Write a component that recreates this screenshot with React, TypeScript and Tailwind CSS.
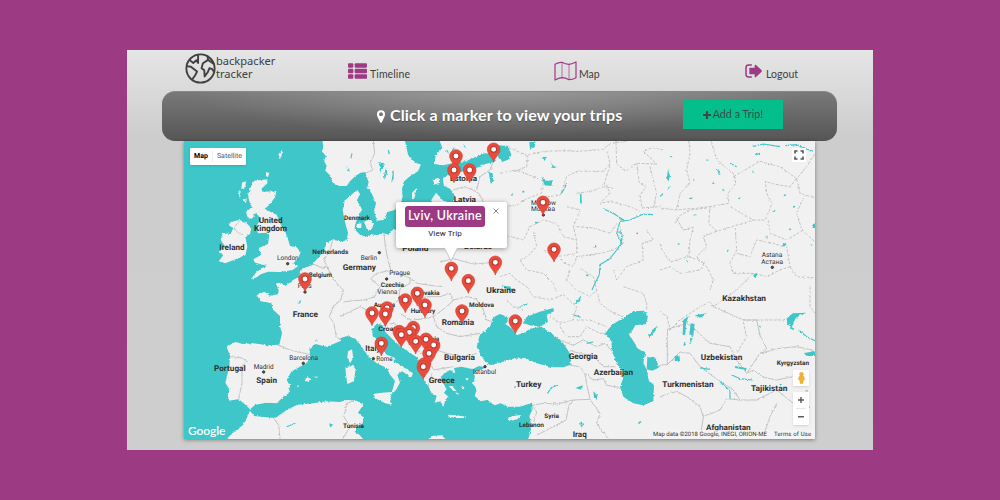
import React from "react";

type Label = [text: string, x: number, baseline: number, width: number, size: number, weight?: number];

// Map drawing units are thirds of a pixel.
const labels: Label[] = [
  ["United", 236, 249, 72, 24], ["Kingdom", 222, 272, 99, 24], ["Ireland", 118, 331, 76, 24],
  ["London", 291, 360, 65, 20, 400], ["Netherlands", 397, 342, 108, 19], ["Belgium", 386, 410, 70, 19],
  ["Paris", 353, 443, 42, 20, 400], ["Denmark", 492, 240, 78, 19], ["Germany", 488, 389, 100, 24],
  ["Berlin", 542, 361, 49, 20, 400], ["Prague", 628, 406, 62, 20, 400], ["Czechia", 602, 442, 70, 19],
  ["Estonia", 810, 124, 81, 23], ["Latvia", 821, 187, 67, 23], ["Poland", 667, 333, 78, 23],
  ["Belarus", 852, 326, 84, 23], ["Moscow", 1053, 194, 75, 20, 400], ["Москва", 1053, 214, 72, 20, 400],
  ["Astana", 1745, 352, 62, 20, 400], ["Астана", 1744, 371, 65, 20, 400], ["Ukraine", 919, 460, 88, 24],
  ["France", 338, 530, 76, 24], ["Barcelona", 328, 660, 86, 20, 400], ["Madrid", 221, 686, 60, 20, 400],
  ["Portugal", 102, 693, 95, 24], ["Spain", 229, 728, 62, 24], ["Vienna", 592, 463, 60, 20, 400],
  ["Austria", 581, 500, 64, 19], ["Slovakia", 703, 466, 76, 19], ["Hungary", 692, 518, 74, 19],
  ["Moldova", 867, 500, 75, 19], ["Romania", 785, 555, 97, 24], ["Croatia", 595, 573, 70, 19],
  ["Serbia", 722, 602, 56, 19], ["Italy", 556, 634, 45, 24], ["Rome", 589, 663, 49, 20, 400],
  ["Bulgaria", 792, 661, 93, 24], ["Istanbul", 879, 703, 69, 20, 400], ["Greece", 746, 729, 78, 24],
  ["Tunisia", 489, 864, 63, 19], ["Georgia", 1166, 657, 87, 24], ["Azerbaijan", 1241, 706, 118, 24],
  ["Turkey", 1008, 742, 76, 24], ["Syria", 1093, 835, 44, 19], ["Lebanon", 1017, 862, 75, 19],
  ["Iraq", 1178, 892, 42, 24], ["Kazakhstan", 1627, 483, 131, 24], ["Uzbekistan", 1562, 661, 125, 24],
  ["Kyrgyzstan", 1790, 674, 97, 19], ["Turkmenistan", 1447, 741, 154, 24],
  ["Tajikistan", 1713, 754, 109, 24], ["Afghanistan", 1578, 871, 134, 23],
];

const cities = [
  [323, 371], [598, 338], [620, 417], [1090, 225], [1777, 382], [375, 456],
  [370, 670], [251, 696], [580, 656], [915, 680], [660, 474],
];

const markers = [
  [941, 28], [828, 48], [822, 90], [869, 90], [1089, 187], [1122, 328], [946, 367], [814, 385],
  [375, 417], [865, 422], [712, 460], [676, 480], [735, 495], [621, 504], [846, 513], [576, 519],
  [616, 522], [1006, 543], [700, 563], [658, 575], [688, 577], [664, 584], [738, 598], [707, 604],
  [604, 610], [761, 615], [747, 640], [733, 672], [730, 680],
];

const seas = [
  // Atlantic, North Sea, Baltic and Mediterranean
  "M0 0 L427 0 L430 20 L426 35 L438 48 L432 62 L440 78 L436 92 L452 108 L456 126 L476 138 L500 138 L510 124 L526 108 L542 98 L556 96 L560 110 L566 126 L562 142 L576 162 L588 190 L582 212 L590 242 L612 240 L622 216 L644 210 L660 196 L668 170 L666 148 L672 124 L694 106 L714 94 L722 76 L700 62 L684 44 L680 24 L674 0 L778 0 L787 24 L768 44 L762 72 L790 76 L822 68 L856 64 L888 50 L914 40 L944 42 L944 66 L916 72 L896 82 L872 88 L842 96 L808 104 L788 114 L792 138 L810 146 L824 164 L822 190 L790 182 L768 158 L754 180 L740 230 L724 262 L700 280 L640 268 L626 284 L606 278 L590 286 L572 282 L560 290 L540 284 L524 268 L526 250 L538 226 L546 210 L540 196 L530 182 L540 162 L532 150 L512 166 L494 182 L488 212 L496 250 L504 278 L500 300 L482 306 L460 298 L440 308 L432 332 L414 354 L394 376 L366 386 L358 410 L336 422 L316 438 L302 428 L288 430 L296 450 L295 462 L270 468 L254 455 L230 465 L242 484 L274 490 L280 510 L300 528 L300 560 L306 580 L298 614 L262 616 L220 610 L188 612 L166 606 L140 620 L150 648 L148 680 L136 728 L148 748 L144 782 L176 778 L194 792 L210 808 L226 794 L260 788 L290 790 L310 770 L326 760 L330 738 L320 720 L335 694 L376 672 L391 654 L388 626 L406 612 L440 620 L480 604 L482 594 L502 588 L526 596 L542 616 L564 648 L590 670 L620 684 L630 704 L645 722 L638 748 L632 764 L646 752 L660 728 L652 704 L666 694 L694 712 L699 700 L670 680 L640 664 L646 654 L620 644 L604 624 L594 604 L578 588 L576 566 L592 550 L608 556 L616 576 L636 596 L660 618 L692 640 L714 654 L722 684 L726 712 L746 740 L756 762 L770 768 L764 788 L782 784 L790 800 L797 778 L806 772 L792 758 L800 748 L790 732 L782 712 L794 698 L810 690 L826 700 L822 684 L844 680 L872 686 L900 688 L884 700 L884 716 L876 728 L890 748 L884 768 L902 784 L922 780 L944 796 L962 790 L984 800 L1020 800 L1056 788 L1058 808 L1048 828 L1055 860 L1044 900 L800 900 L784 886 L756 888 L742 900 L552 900 L538 884 L524 876 L530 862 L548 850 L550 832 L534 818 L550 794 L530 782 L500 780 L480 786 L440 784 L400 790 L352 794 L320 810 L286 834 L222 828 L210 812 L202 830 L190 854 L162 876 L136 900 L0 900Z",
  // Black Sea
  "M960 522 L940 532 L930 560 L900 584 L890 620 L902 644 L914 662 L930 676 L960 668 L1000 656 L1035 654 L1070 670 L1110 680 L1150 682 L1172 674 L1172 644 L1150 610 L1120 584 L1084 560 L1050 566 L1030 580 L1010 585 L996 566 L976 552 L986 532Z",
  "M1030 550 L1040 530 L1080 515 L1120 504 L1122 514 L1100 524 L1104 546 L1080 560 L1050 556Z",
  // Caspian Sea
  "M1276 580 L1296 554 L1326 536 L1360 514 L1392 512 L1404 530 L1398 552 L1366 556 L1356 574 L1346 582 L1366 612 L1372 626 L1396 636 L1390 668 L1400 690 L1406 720 L1422 736 L1420 784 L1390 796 L1360 790 L1330 770 L1320 740 L1330 714 L1324 690 L1304 656 L1296 630 L1294 604Z",
  "M1402 650 L1430 656 L1436 684 L1416 692 L1400 686Z",
  // Sea of Marmara
  "M880 686 L898 678 L914 682 L906 690Z",
  // Lakes
  "M956 16 L984 18 L994 44 L988 58 L966 66 L954 50Z", "M1048 6 L1066 4 L1064 20 L1050 28Z",
  "M1084 110 L1102 124 L1118 120 L1114 138 L1094 136Z", "M1081 52 L1098 50 L1096 60Z",
  "M1112 62 L1118 76 L1130 82 L1118 84Z", "M1200 162 L1204 160 L1206 194 L1200 188Z",
  "M598 66 L612 70 L608 86 L600 96Z", "M612 106 L618 84 L622 96 L614 120Z",
  "M638 100 L642 88 L640 120 L634 128Z", "M926 96 L938 100 L940 124 L932 132Z",
  "M1510 540 L1526 528 L1518 550 L1516 586 L1508 584Z", "M1532 550 L1544 552 L1540 588 L1528 584Z",
  "M1544 526 L1580 520 L1562 534Z", "M1484 648 L1498 646 L1500 662 L1484 664Z",
  "M1820 536 L1838 520 L1880 518 L1856 528 L1842 544 L1836 560 L1822 554Z",
  "M1872 640 L1905 632 L1905 648 L1880 648Z", "M1896 254 L1905 250 L1905 264 L1898 264Z",
  "M1806 308 L1820 312 L1812 320Z", "M1722 402 L1732 400 L1728 414 L1720 410Z",
  "M1464 88 L1470 108 L1466 124 L1460 116Z", "M1664 678 L1700 684 L1698 690 L1666 684Z",
  "M1186 744 L1208 736 L1206 750Z", "M1240 754 L1252 766 L1250 780 L1242 772Z",
  "M1404 588 L1432 556 L1426 572 L1408 594Z", "M1184 490 L1204 466 L1200 484 L1188 492Z",
  "M1006 504 L1044 490 L1040 496 L1020 500Z", "M1200 846 L1210 852 L1204 866Z",
  "M448 850 L460 854 L450 862Z", "M964 436 L990 440 L998 450 L978 446Z",
  "M1373 844 L1384 846 L1378 852Z", "M1002 740 L1010 738 L1006 744Z",
];

const islands = [
  // Great Britain
  "M222 122 L262 118 L262 130 L243 148 L248 155 L290 154 L285 172 L268 195 L254 206 L272 216 L290 224 L300 250 L322 290 L330 318 L350 322 L362 336 L354 356 L340 370 L355 378 L338 390 L300 396 L265 395 L244 402 L230 412 L213 418 L226 400 L244 385 L262 378 L226 368 L220 358 L244 345 L234 325 L264 312 L268 285 L262 278 L234 280 L230 258 L242 236 L226 215 L218 236 L204 235 L198 216 L215 202 L208 186 L204 165 L212 142Z",
  // Ireland
  "M152 246 L178 240 L196 246 L214 264 L210 282 L196 290 L202 320 L196 346 L170 356 L136 370 L116 364 L130 346 L116 336 L134 318 L122 300 L128 278 L152 282 L160 264 L146 256Z",
  "M186 130 L200 122 L194 142 L184 148Z", "M176 156 L182 152 L180 176Z", "M188 178 L200 176 L198 190Z",
  "M258 98 L268 98 L264 112 L258 108Z", "M298 40 L308 28 L304 50 L298 62Z",
  // Danish and Baltic islands
  "M552 246 L570 236 L582 250 L576 266 L562 270Z", "M530 252 L544 250 L544 264 L532 264Z",
  "M696 158 L710 144 L704 170 L696 178Z", "M758 118 L776 114 L780 128 L762 134Z",
  // Mediterranean
  "M504 634 L516 628 L520 654 L510 670 L502 652Z", "M496 682 L522 676 L526 692 L522 724 L502 732 L498 704Z",
  "M580 762 L604 758 L636 756 L630 776 L634 794 L616 790 L584 774Z",
  "M374 716 L384 712 L394 718 L386 726 L376 724Z", "M402 710 L414 710 L410 714Z", "M350 738 L358 736 L354 742Z",
  "M804 824 L830 826 L858 830 L856 834 L830 834 L806 830Z",
  "M982 834 L1000 828 L1024 824 L1012 838 L994 842Z",
  "M826 756 L838 762 L832 766Z", "M842 738 L854 742 L848 748Z", "M816 738 L830 754 L820 752 L806 738Z",
  "M858 716 L866 714 L862 722Z", "M760 210 L772 196 L766 214Z",
];

const countryBorders = [
  "M580 3 L584 40 L570 70 L578 90 L556 100", "M458 300 L450 330 L432 360 L446 390 L456 410",
  "M384 380 L400 372 L426 384 L440 380 L450 400 L470 430 L490 450 L482 480 L460 500 L448 530 L462 550 L468 586 L480 600",
  "M294 616 L330 630 L374 640 L392 644", "M150 650 L186 654 L200 664 L186 680 L186 730 L176 776",
  "M612 280 L616 320 L624 360 L634 396 L660 402 L690 414 L712 430 L750 436 L790 440",
  "M628 392 L590 400 L572 416 L600 440 L584 470 L556 480 L520 482 L490 486",
  "M690 414 L690 430 L660 446 L656 480 L630 500 L600 498 L560 510 L540 500 L500 520 L480 530",
  "M656 480 L700 484 L740 470 L780 470 L810 460 L820 480 L800 500 L760 530 L720 538 L690 540 L660 520",
  "M820 480 L860 470 L888 476 L910 510 L920 540 L940 546", "M760 530 L770 560 L800 580 L840 590 L900 580",
  "M780 366 L820 356 L880 372 L930 368 L950 364", "M820 150 L852 140 L880 150 L896 160 L912 190 L930 200 L950 230",
  "M940 66 L930 90 L900 110 L890 150", "M610 556 L640 550 L664 564 L700 560 L700 600 L720 640 L740 640 L760 690 L820 680",
  "M730 590 L760 600 L770 630 L800 640 L850 650 L890 640", "M744 740 L756 700", "M280 832 L296 856 L300 896",
  "M530 780 L500 790 L492 830 L510 860 L486 900", "M1056 796 L1090 790 L1130 792 L1180 780 L1230 778",
  "M1170 676 L1200 680 L1214 700 L1220 730 L1230 778 L1260 820 L1250 850 L1284 896",
  "M1180 780 L1166 800 L1158 840 L1070 886", "M1060 800 L1070 816 L1060 850", "M1214 700 L1240 720 L1270 716 L1280 736 L1318 742",
  "M1160 630 L1200 640 L1240 648 L1270 680 L1306 680", "M1140 600 L1180 616 L1210 600 L1250 620 L1276 610 L1310 650",
  "M1400 690 L1450 674 L1462 674 L1462 568 L1520 550 L1540 564 L1590 610 L1650 620 L1670 660 L1700 700 L1740 640 L1760 626 L1740 586 L1730 540",
  "M1462 674 L1500 636 L1530 640 L1560 680 L1600 710 L1660 750 L1680 780",
  "M1730 540 L1690 540 L1600 500 L1590 486", "M1740 640 L1790 626 L1850 620 L1905 632",
  "M1440 770 L1490 754 L1520 770 L1560 800 L1570 830 L1620 810 L1640 776 L1680 780 L1730 780 L1790 750 L1840 790 L1890 800",
  "M1700 700 L1720 690 L1750 712 L1790 720 L1840 710 L1880 710", "M1570 830 L1560 896", "M1790 790 L1770 830 L1750 890",
];

const regionBorders = [
  "M960 30 L990 24 L1040 46 L1090 34 L1150 32 L1200 34 L1270 28 L1290 10 L1340 4",
  "M960 100 L1010 90 L1050 106 L1090 124 L1084 160 L1040 176 L1010 196 L960 200",
  "M1044 46 L1040 80 L1000 96", "M1100 170 L1140 166 L1160 110 L1190 94 L1270 94 L1290 70 L1280 30",
  "M1190 160 L1240 152 L1280 136 L1290 160 L1260 190 L1290 184 L1350 200 L1380 214",
  "M1290 76 L1270 140 L1300 144", "M1308 6 L1310 70 L1336 94 L1370 70 L1430 72 L1390 34 L1420 22 L1450 30",
  "M1370 70 L1378 130 L1400 140 L1380 164 L1386 204 L1440 200", "M1410 80 L1430 160 L1420 206",
  "M960 320 L986 288 L1030 300 L1050 260 L1090 240 L1130 250 L1150 290 L1190 300",
  "M1020 360 L1046 346 L1070 320 L1060 270", "M1090 330 L1130 350 L1190 340 L1190 300 L1180 260 L1200 210 L1160 200",
  "M1020 360 L1040 390 L1090 400 L1120 430 L1130 456", "M1150 368 L1180 380 L1190 350 L1260 340 L1300 330 L1330 310 L1320 260",
  "M1190 260 L1240 264 L1290 280 L1310 250", "M1300 390 L1310 420 L1340 380 L1390 360 L1386 310 L1420 300 L1400 270",
  "M1170 390 L1160 420 L1190 450 L1230 470 L1250 450 L1240 410 L1200 384",
  "M1526 0 L1530 40 L1520 90 L1530 130 L1500 160 L1490 210", "M1594 4 L1610 60 L1660 100 L1668 130 L1644 160 L1646 190 L1590 200 L1490 210 L1440 204",
  "M1660 110 L1740 64 L1800 80 L1850 116 L1880 80 L1905 40", "M1850 116 L1830 140 L1780 132 L1756 124 L1760 160 L1776 190 L1756 240 L1720 240 L1650 200",
  "M1590 200 L1586 250 L1610 274 L1700 246 L1720 240", "M1850 116 L1860 160 L1905 174", "M1870 174 L1850 220 L1866 270 L1905 306",
  "M1764 240 L1770 280 L1820 300 L1870 270", "M1610 274 L1570 288 L1580 320 L1550 350 L1580 380 L1600 420 L1590 450",
  "M1666 264 L1670 330 L1650 370 L1660 400 L1720 400 L1760 410 L1800 390 L1830 380 L1820 320",
  "M1670 340 L1710 350 L1730 300 L1780 310 L1810 320", "M1830 380 L1850 410 L1905 414", "M1720 400 L1690 430 L1670 450 L1600 500",
  "M1490 236 L1510 270 L1540 262 L1530 300 L1526 350 L1470 366 L1446 330 L1440 310", "M1486 250 L1500 226 L1530 210 L1580 204",
  "M1440 390 L1470 380 L1500 400 L1560 390 L1574 370 L1520 346", "M1590 486 L1560 500 L1500 540 L1470 570 L1462 530 L1440 514",
  "M1690 540 L1810 540 L1820 536", "M1690 546 L1700 590 L1670 640", "M1890 440 L1890 500 L1905 520",
  "M1040 440 L1060 470 L1110 480 L1150 464 L1190 500 L1180 540 L1140 550 L1110 530", "M1190 540 L1230 540 L1280 560",
  "M1250 450 L1260 490 L1300 520 L1330 530", "M1140 560 L1160 590 L1200 590 L1220 560 L1260 580 L1280 580",
  "M960 410 L990 400 L1010 420 L1040 440", "M980 480 L1000 500 L1030 510", "M1330 440 L1390 460 L1400 490 L1400 512",
];

const rivers = [
  "M1236 450 L1248 424 L1258 404 L1260 374 L1290 356 L1310 330 L1326 310 L1310 280 L1320 244 L1350 240 L1390 222 L1420 224",
  "M1330 240 L1300 220 L1270 206", "M1316 274 L1326 284 L1322 310", "M1144 160 L1154 144 L1160 130",
  "M1620 726 L1650 752 L1650 776", "M1830 554 L1840 570 M1856 570 L1880 590 L1905 602", "M1654 704 L1680 716 L1716 720",
  "M1716 20 L1750 12 L1800 20 M1816 17 L1850 14 L1896 34", "M1726 44 L1740 40", "M1440 170 L1450 160 M1462 148 L1470 140",
  "M1650 70 L1670 80", "M1612 88 L1620 104", "M1515 606 L1512 616 M1536 594 L1530 612", "M1470 46 L1476 54",
  "M1102 760 L1116 742 L1134 736", "M680 18 L690 34", "M516 40 L512 56", "M530 110 L534 140", "M700 446 L706 442",
  "M818 30 L824 22 M800 30 L806 40 M850 14 L856 24", "M500 80 L508 94", "M625 30 L628 42",
  "M1640 336 L1646 328", "M1520 360 L1524 366", "M1786 212 L1778 214", "M1560 684 L1590 688", "M354 490 L362 482",
  "M406 604 L412 600", "M320 860 L346 850", "M1180 524 L1202 532", "M1220 610 L1240 606",
];

const dots = [
  [1540, 120], [1582, 60], [1600, 130], [1533, 175], [1630, 150], [1680, 175], [1720, 95], [1814, 166], [1842, 200],
  [1760, 290], [1830, 268], [1895, 312], [1496, 312], [1546, 225], [1246, 320], [1070, 248],
  [1222, 406], [1144, 360], [996, 165], [1030, 155], [1372, 280], [1740, 560], [1880, 752], [1802, 734],
];

function Marker({ x, y }: { x: number; y: number }) {
  return (
    <g transform={`translate(${x} ${y})`}>
      <path d="M0 38 C-3 25 -19 15 -19 0 A19 19 0 0 1 19 0 C19 15 3 25 0 38Z" fill="#ea4b3c" stroke="#d5402f" strokeWidth="2" />
      <circle r="9" fill="#fff" stroke="#b63c34" strokeWidth="3.5" />
    </g>
  );
}

function MapDrawing() {
  return (
    <svg viewBox="12 3 1893 894" preserveAspectRatio="none" className="block h-full w-full" fontFamily="Roboto, 'Liberation Sans', sans-serif">
      <defs>
        <filter id="coast" x="0" y="0" width="1" height="1" colorInterpolationFilters="sRGB">
          <feTurbulence type="fractalNoise" baseFrequency="0.14" numOctaves="2" seed="4" />
          <feDisplacementMap in="SourceGraphic" scale="8" xChannelSelector="R" yChannelSelector="G" />
        </filter>
      </defs>
      <rect x="0" y="0" width="1920" height="910" fill="#f1f1f1" />
      <g filter="url(#coast)">
        <rect x="-20" y="-20" width="1960" height="950" fill="#f1f1f1" />
        <g fill="none" stroke="#bcbcbc" strokeWidth="2.6">
          {countryBorders.map((d) => <path key={d} d={d} />)}
          <g strokeDasharray="9 4">
            {regionBorders.map((d) => <path key={d} d={d} />)}
          </g>
        </g>
        <g fill="#3ec6c9">
          {seas.map((d) => <path key={d} d={d} />)}
          {dots.map(([x, y]) => <ellipse key={`${x}-${y}`} cx={x} cy={y} rx="3.5" ry="2.5" />)}
        </g>
        <g fill="none" stroke="#3ec6c9" strokeWidth="3.4">
          {rivers.map((d) => <path key={d} d={d} />)}
        </g>
        <g fill="#f1f1f1">
          {islands.map((d) => <path key={d} d={d} />)}
        </g>
        <path d="M178 242 L162 264 L176 280 L192 284" fill="none" stroke="#bcbcbc" strokeWidth="2.5" />
      </g>
      <g fill="#555" stroke="#333" strokeWidth="3">
        {cities.map(([x, y]) => <circle key={`${x}-${y}`} cx={x} cy={y} r="3.5" />)}
      </g>
      <g fill="#303030" textRendering="geometricPrecision">
        {labels.map(([text, x, y, width, size, weight = 700]) => (
          <text key={text} x={x} y={y} textLength={width} lengthAdjust="spacingAndGlyphs" fontSize={size} fontWeight={weight}>{text}</text>
        ))}
      </g>
      {markers.map(([x, y]) => <Marker key={`${x}-${y}`} x={x} y={y} />)}
    </svg>
  );
}

function GlobeLogo() {
  return (
    <svg viewBox="0 0 90 90" className="h-[31px] w-[31px] shrink-0" fill="none" stroke="#404040" strokeWidth="5.5" strokeLinejoin="round">
      <circle cx="45" cy="45" r="41" />
      <path d="M13 20 L24 29 L33 21 L38 29 L38 6 M5 38 L17 40 L35 54 L30 64 L21 77 M84 32 L67 20 L65 7 M84 54 L79 47 L71 44 L66 56 L57 68 L56 50 L48 44 L52 30 L67 20" />
    </svg>
  );
}

function ListIcon() {
  return (
    <svg viewBox="0 0 57 46" className="h-[16px] w-[19px]" fill="#9c3a83">
      {[0, 16.5, 33].map((y) => (
        <g key={y}>
          <rect y={y} width="16" height="13" rx="3" />
          <rect x="20" y={y} width="37" height="13" rx="3" />
        </g>
      ))}
    </svg>
  );
}

function FoldedMapIcon() {
  return (
    <svg viewBox="0 0 69 60" className="h-[20px] w-[23px]" fill="none" stroke="#9c3a83" strokeWidth="3.6" strokeLinejoin="round">
      <path d="M3 10 Q14 3 24 4 Q34 10 45 10 Q56 8 66 3 V50 Q56 56 45 56 Q34 50 24 50 Q14 51 3 57Z" />
      <path d="M24 4 V50 M45 10 V56" strokeWidth="2" />
    </svg>
  );
}

function LogoutIcon() {
  return (
    <svg viewBox="0 0 51 42" className="h-[14px] w-[17px]">
      <path d="M19 3 H11 Q3 3 3 11 V31 Q3 39 11 39 H19" fill="none" stroke="#9c3a83" strokeWidth="4.5" strokeLinecap="round" />
      <path d="M13 13 Q13 11 15 11 H29 V4 Q30 1 33 3 L50 19 Q51 21 50 23 L33 39 Q30 41 29 38 V31 H15 Q13 31 13 29Z" fill="#9c3a83" />
    </svg>
  );
}

function InfoWindow() {
  return (
    <div className="absolute left-[212px] top-[61px] h-[46px] w-[111px] rounded-[2px] bg-white shadow-[0_1px_5px_rgba(0,0,0,0.38)]">
      <svg viewBox="0 0 14 15" className="absolute left-[48px] top-[45px] h-[15px] w-[14px] overflow-visible">
        <path d="M0 0 L7 14 L14 0" fill="#fff" stroke="#bbb" strokeWidth=".8" />
        <path d="M0 -1 H14 V1 H0Z" fill="#fff" />
      </svg>
      <div className="flex flex-col pl-[9px] pt-[4px]">
        <span className="flex h-[21px] w-[80px] items-center justify-center whitespace-nowrap rounded-[3px] bg-[#9c3a83] text-[12.5px] font-semibold tracking-[0.3px] text-white">Lviv, Ukraine</span>
        <span className="mt-[1px] w-[80px] whitespace-nowrap text-center font-[Roboto,sans-serif] text-[8px] leading-[12px] tracking-[0.1px] text-[#222]">View Trip</span>
      </div>
      <svg viewBox="0 0 6 6" className="absolute right-[8px] top-[6px] size-[6px]" stroke="#888" strokeWidth="1"><path d="M.5 .5 L5.5 5.5 M5.5 .5 L.5 5.5" /></svg>
    </div>
  );
}

function MapControls() {
  return (
    <div className="font-[Roboto,sans-serif]">
      <div className="absolute left-[6px] top-[7px] flex h-[17px] w-[56px] items-center whitespace-nowrap rounded-[1px] bg-white text-[7px] shadow-sm [text-rendering:geometricPrecision]">
        <span className="w-[23px] border-r border-[#eee] text-center font-bold text-black">Map</span>
        <span className="flex-1 text-center text-[#565656]">Satellite</span>
      </div>
      <div className="absolute right-[9px] top-[7px] flex size-[14px] items-center justify-center bg-white">
        <svg viewBox="0 0 10 10" className="size-[10px]" fill="none" stroke="#555" strokeWidth="1.6"><path d="M1 3.5 V1 H3.5 M6.5 1 H9 V3.5 M9 6.5 V9 H6.5 M3.5 9 H1 V6.5" /></svg>
      </div>
      <div className="absolute right-[6px] top-[229px] flex h-[16px] w-[16px] items-center justify-center rounded-[1px] bg-white shadow-sm">
        <svg viewBox="0 0 20 34" className="h-[12px] w-[7px]" fill="#f5b32b" stroke="#d99221" strokeWidth="1">
          <path d="M3 13 Q10 9 17 13 L19 22 L15 22 L14 33 H6 L5 22 L1 22Z" /><circle cx="10" cy="6" r="5.5" />
        </svg>
      </div>
      <div className="absolute right-[6px] top-[251px] flex h-[33px] w-[16px] flex-col items-center rounded-[1px] bg-white shadow-sm">
        <svg viewBox="0 0 16 33" className="h-full w-full" stroke="#5c5c5c" strokeWidth="1.5"><path d="M5 8 H11 M8 5 V11 M5 24.7 H11" /><path d="M3 16.5 H13" stroke="#e6e6e6" strokeWidth="1" /></svg>
      </div>
      <span className="absolute bottom-[-2px] left-[4px] font-[Lato,sans-serif] text-[12px] font-semibold leading-[20px] tracking-[-0.1px] text-white">Google</span>
      <div className="absolute bottom-0 right-0 flex h-[9px] items-center whitespace-nowrap bg-[#f5f5f5]/70 pr-[3px] text-[6px] leading-[9px] text-[#333] [text-rendering:geometricPrecision]">
        <span className="w-[121px]">Map data ©2018 Google, INEGI, ORION-ME</span>
        <span className="w-[38px] tracking-[0.15px]">Terms of Use</span>
      </div>
    </div>
  );
}

export default function App() {
  return (
    <div className="flex h-[500px] w-[1000px] justify-center overflow-hidden bg-[#9c3a83] pt-[50px] font-[Lato,'Liberation_Sans',sans-serif]">
      <main className="h-[400px] w-[746px] bg-[linear-gradient(#e5e5e5_0px,#cdcdcd_86px,#cecece_100%)]">
        <nav className="flex h-[41px] pl-[58px] text-[10.5px] text-[#404040]">
          <div className="flex w-[163px] pt-[3px]">
            <GlobeLogo />
            <span className="pt-[1px] font-['Noto_Sans',sans-serif] text-[11.1px] leading-[13px]">backpacker<br />tracker</span>
          </div>
          <div className="flex w-[206px] items-start gap-[3px] pt-[13px]">
            <ListIcon /><span className="pt-[3px] leading-[16px] tracking-[0.1px]">Timeline</span>
          </div>
          <div className="flex w-[191px] items-start gap-[2px] pt-[11px]">
            <FoldedMapIcon /><span className="pt-[5px] leading-[16px]">Map</span>
          </div>
          <div className="flex items-start gap-[4px] pt-[14px]">
            <LogoutIcon /><span className="pt-[2px] leading-[16px] tracking-[0.05px]">Logout</span>
          </div>
        </nav>
        <header className="ml-[35px] flex h-[50px] w-[675px] items-center rounded-[13px] border-y border-t-[#888] border-b-[#505050] bg-[radial-gradient(ellipse_at_50%_0%,rgba(255,255,255,0.25),transparent_65%),linear-gradient(#797979,#565656)] pl-[215px]">
          <svg viewBox="0 0 24 38" className="mr-[5px] h-[13px] w-[8px]" fill="#fff"><path fillRule="evenodd" d="M12 0 A12 12 0 0 0 0 12 Q0 17 4 25 L10 37 Q12 39 14 37 L20 25 Q24 17 24 12 A12 12 0 0 0 12 0Z M12 6 A6 6 0 1 1 12 18 A6 6 0 1 1 12 6Z" /></svg>
          <h1 className="mb-[2px] w-[293px] whitespace-nowrap text-[16px] font-bold leading-[24px] tracking-[0.13px] text-white [text-shadow:0_1px_1px_rgba(0,0,0,0.3)]">Click a marker to view your trips</h1>
          <button className="mb-[3px] flex h-[29px] w-[100px] items-center justify-center gap-[2px] whitespace-nowrap bg-[#04bf8b] text-[10.6px] tracking-[0.1px] text-[#3e484c]">
            <svg viewBox="0 0 8 8" className="size-[8px]" stroke="#3e484c" strokeWidth="2.2"><path d="M0 4 H8 M4 0 V8" /></svg>
            Add a Trip!
          </button>
        </header>
        <section className="relative ml-[57px] h-[298px] w-[631px] shadow-[0_1px_4px_rgba(0,0,0,0.4)]">
          <MapDrawing />
          <MapControls />
          <InfoWindow />
        </section>
      </main>
    </div>
  );
}
